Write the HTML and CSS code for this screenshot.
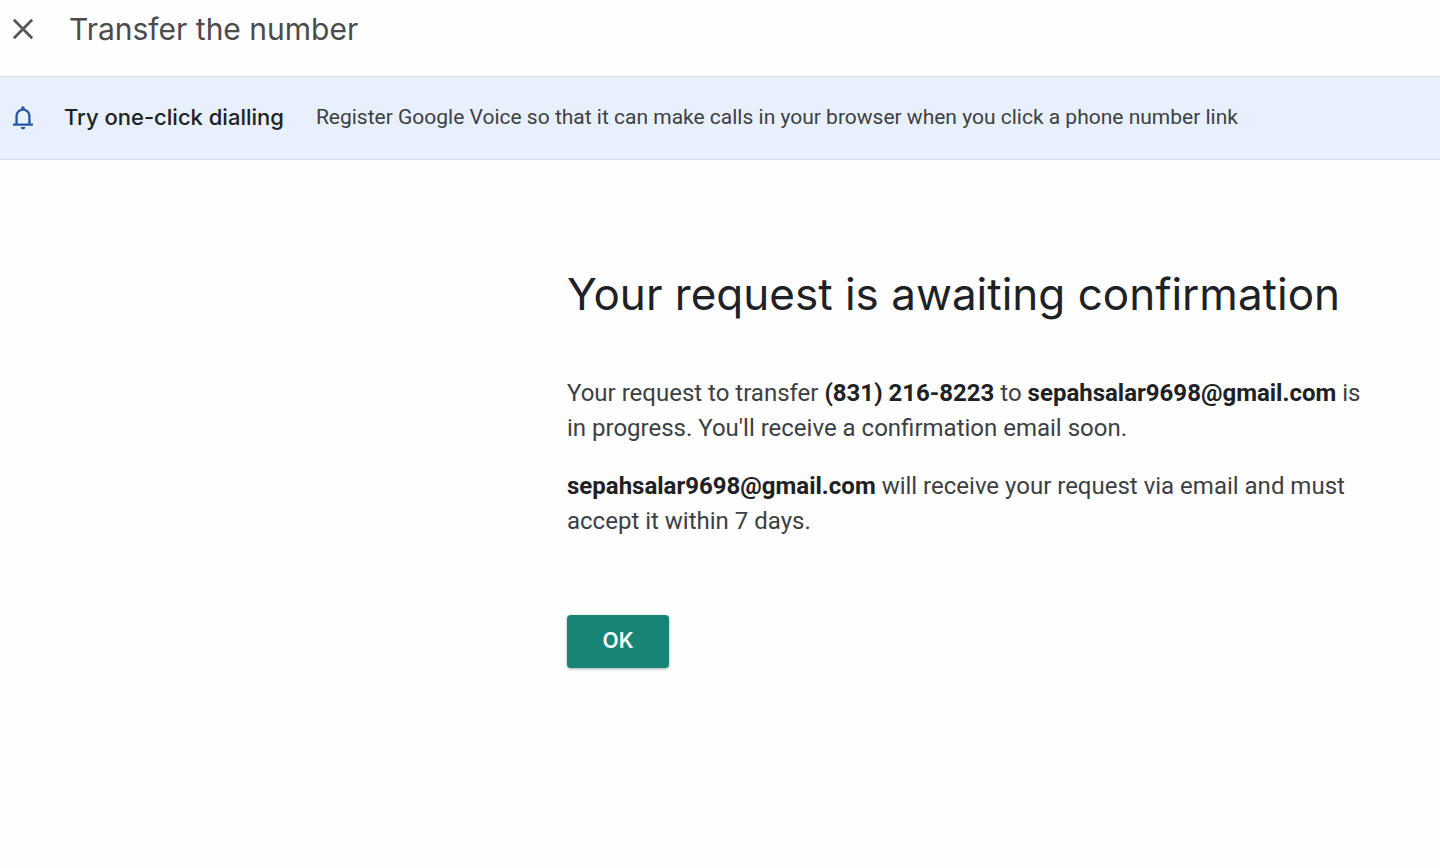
FILE: index.html
```html
<!DOCTYPE html>
<html lang="en">
<head>
<meta charset="utf-8">
<meta name="viewport" content="width=device-width, initial-scale=1">
<title>Transfer the number</title>
<link rel="stylesheet" href="styles.css">
</head>
<body>
<header class="topbar">
  <button class="close" type="button" aria-label="Close">
    <svg viewBox="0 0 24 24" width="22" height="22" aria-hidden="true"><path d="M2 2 22 22M22 2 2 22" fill="none" stroke="currentColor" stroke-width="3"/></svg>
  </button>
  <h2 class="topbar-title">Transfer the number</h2>
</header>
<section class="banner">
  <svg class="bell" viewBox="0 0 24 24" width="28" height="28" aria-hidden="true"><path fill="currentColor" d="M12 22.500c1.100 0 2-.9 2-2h-4c0 1.100.9 2 2 2zM18.500 17.500v-6c0-3.400-1.900-5.900-5-6.600V4.200c0-.83-.67-1.500-1.500-1.500s-1.500.67-1.500 1.500v.7c-3.100.7-5 3.200-5 6.600v6H3.500v2h17v-2zm-2 0h-9v-6c0-2.800 1.800-4.800 4.500-4.800s4.500 2 4.500 4.800z"/></svg>
  <strong class="banner-title">Try one-click dialling</strong>
  <span class="banner-text">Register Google Voice so that it can make calls in your browser when you click a phone number link</span>
</section>
<main class="content">
  <h1 class="heading">Your request is awaiting confirmation</h1>
  <p class="message">Your request to transfer <b>(831) 216-8223</b> to <b>sepahsalar9698@gmail.com</b> is in progress. You'll receive a confirmation email soon.</p>
  <p class="message"><b>sepahsalar9698@gmail.com</b> will receive your request via email and must accept it within 7 days.</p>
  <button class="ok" type="button">OK</button>
</main>
</body>
</html>
```
FILE: styles.css
```css
* { box-sizing: border-box; }
body { margin: 0; background: #fefefe; color: #202124; font-family: Roboto, "Liberation Sans", sans-serif; }
.topbar { display: flex; align-items: center; gap: 35px; height: 76px; padding: 0 12px 18px; }
.close { display: flex; padding: 0; border: 0; background: none; color: #55565a; }
.topbar-title { margin: 0; font: 400 30px/40px Inter, sans-serif; color: #4b4a4d; }
.banner { display: flex; align-items: center; height: 84px; padding: 0 9px 2px; background: #e8f0fe; border-top: 1px solid #d5dce6; border-bottom: 1px solid #d5dce6; }
.bell { flex: none; margin-right: 27px; color: #2458a6; }
.banner-title { margin-right: 32px; font: 500 22px/32px Inter, sans-serif; white-space: nowrap; }
.banner-text { font-size: 21px; line-height: 28px; color: #3c4043; }
.content { padding: 102px 72px 32px 567px; }
.heading { margin: 0 0 50px; font: 400 44px/64px Inter, sans-serif; white-space: nowrap; }
.message { margin: 0 0 23px; font-size: 24px; line-height: 35px; color: #3c4043; }
.message b { font-weight: 700; color: #202124; }
.ok { display: block; width: 102px; height: 53px; margin-top: 76px; padding: 0 0 2px; border: 0; border-radius: 4px; background: #188475; color: #fff; font: 600 21px/28px Inter, sans-serif; box-shadow: 0 1px 3px #0005; }
```
